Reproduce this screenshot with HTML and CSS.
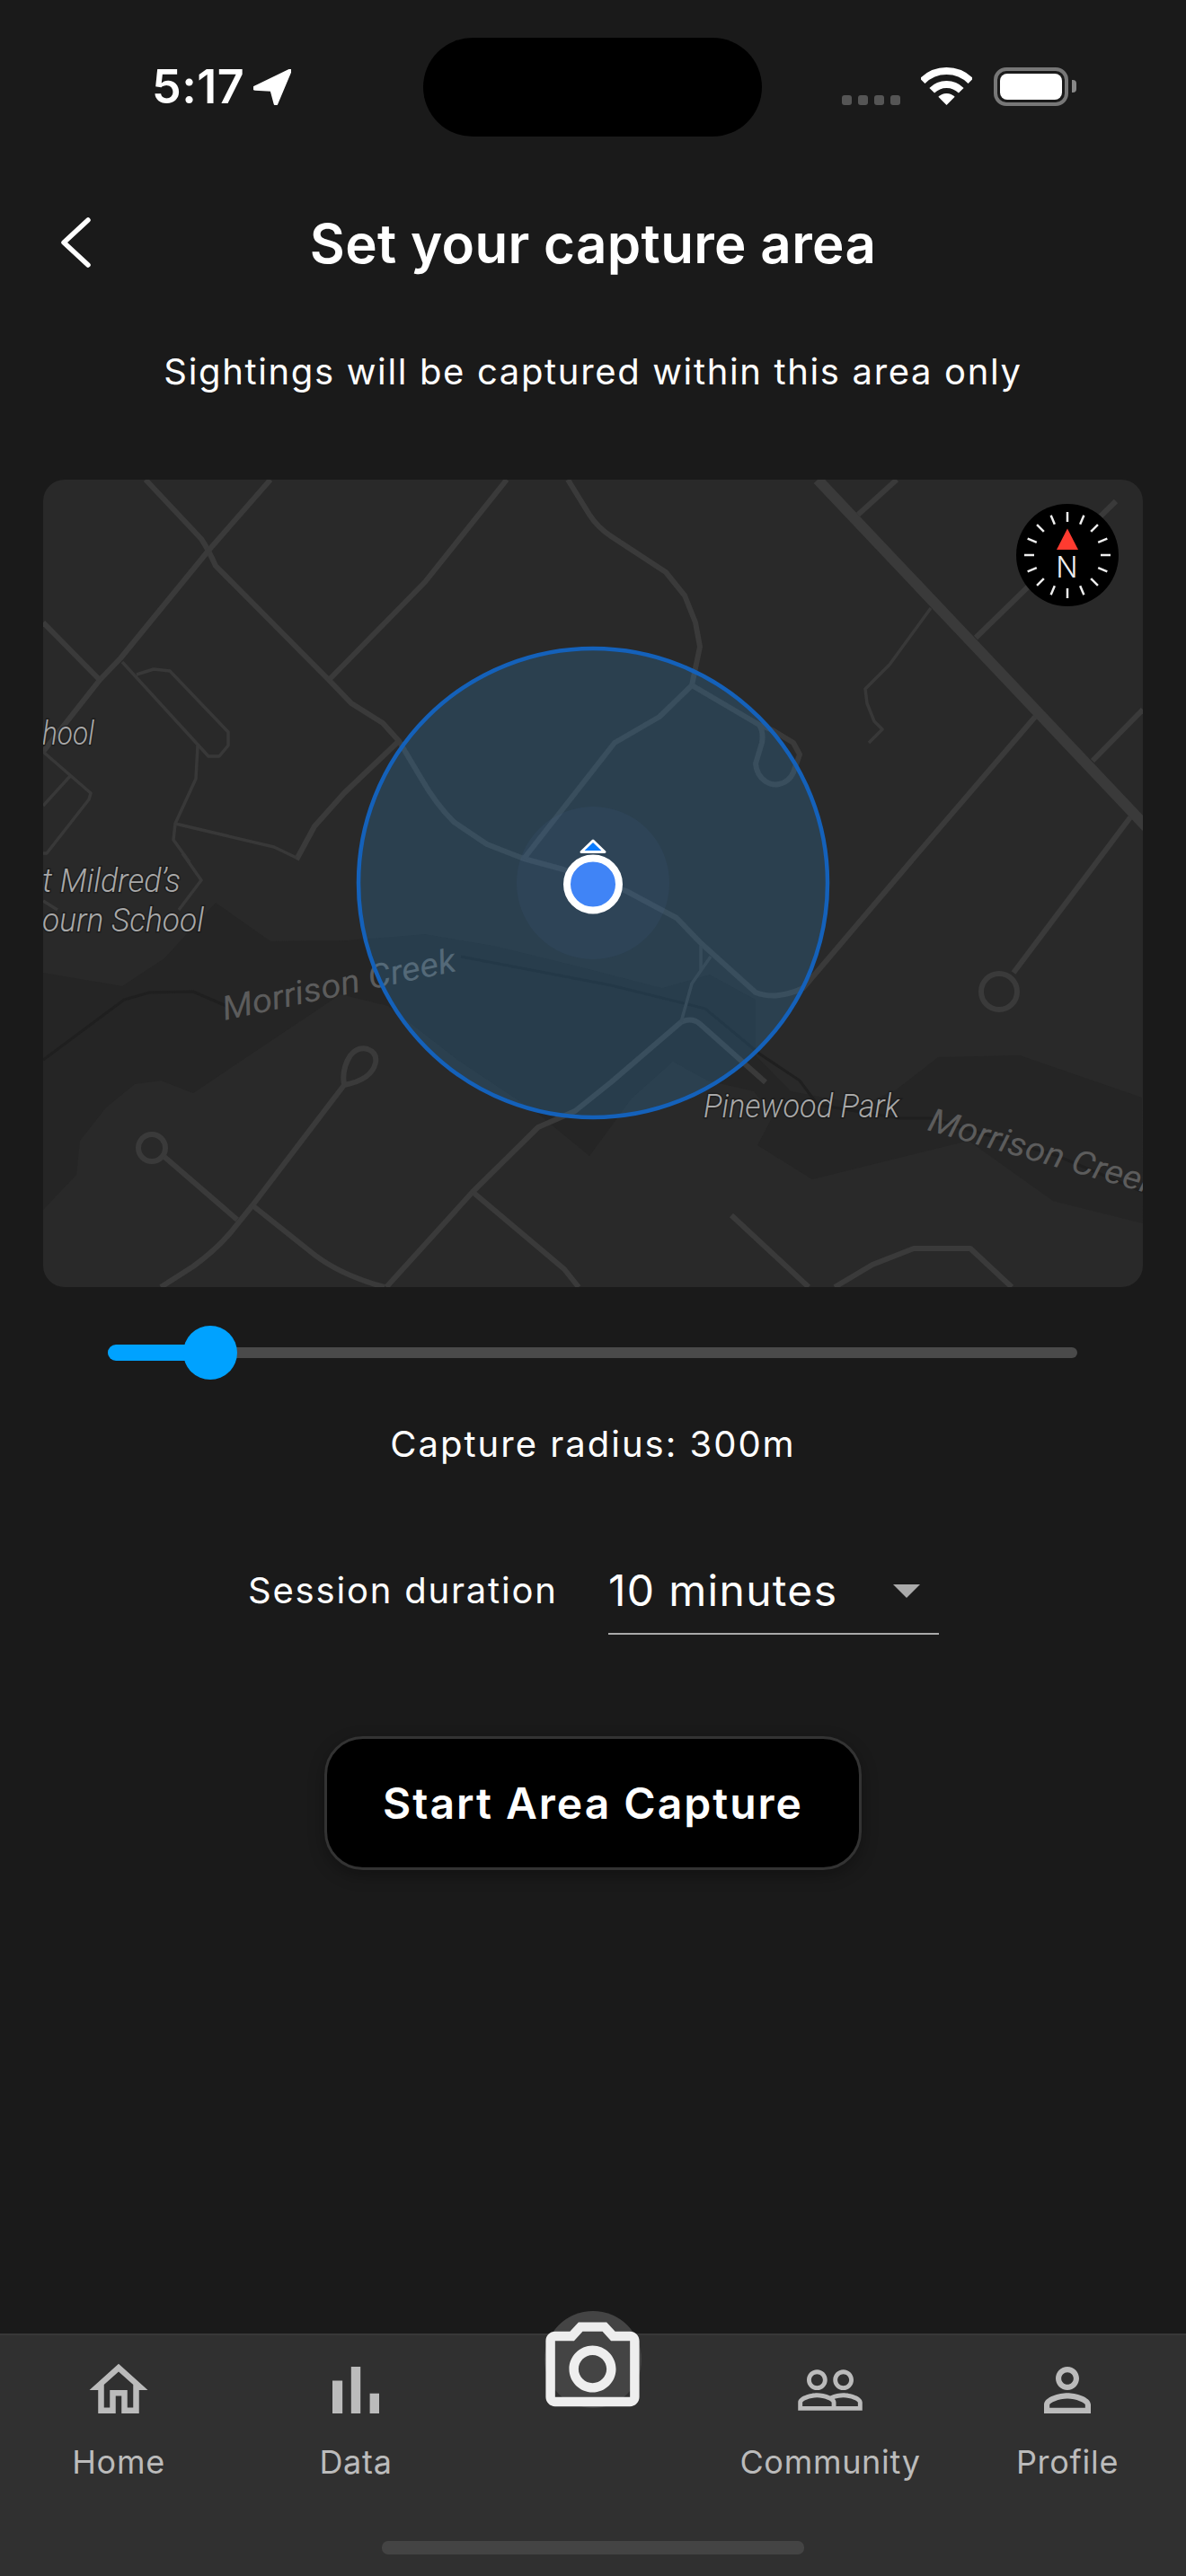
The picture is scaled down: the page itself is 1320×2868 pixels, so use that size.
FILE: index.html
```html
<!DOCTYPE html>
<html lang="en">
<head>
<meta charset="utf-8">
<title>Set your capture area</title>
<link rel="stylesheet" href="styles.css">
</head>
<body>
<div class="page">
  <div class="status">
    <div class="status-left">
      <span class="time">5:17</span>
      <svg class="loc" viewBox="0 0 42 40"><path d="M40 .6c1.300-.6 2.400.5 1.800 1.800L26.500 38.600c-.7 1.600-2.800 1.300-3.200-.3L19.500 24 2 23c-2-.1-2.600-2.700-.8-3.600z"/></svg>
    </div>
    <div class="island"></div>
    <div class="status-right">
      <div class="dots"><i></i><i></i><i></i><i></i></div>
      <svg class="wifi" viewBox="0 0 57 42"><path class="wifi-arc" d="M1.630 15.130A38 38 0 0 1 55.370 15.130"/><path class="wifi-arc" d="M12.240 25.740A23 23 0 0 1 44.760 25.740"/><path class="wifi-fill" d="M28.500 42L19.300 32.800A13 13 0 0 1 37.700 32.800Z"/></svg>
      <div class="battery"><div class="battery-fill"></div></div>
      <div class="battery-nub"></div>
    </div>
  </div>

  <header class="header">
    <svg class="back" viewBox="0 0 34 56"><path d="M31 3L4 28l27 25"/></svg>
    <h1 class="title">Set your capture area</h1>
  </header>
  <p class="sub">Sightings will be captured within this area only</p>

  <svg class="map" viewBox="48 534 1224 899" xmlns="http://www.w3.org/2000/svg">
    <defs><clipPath id="mapclip"><rect x="48" y="534" width="1224" height="899" rx="24"/></clipPath></defs>
    <g clip-path="url(#mapclip)">
      <rect class="land" x="48" y="534" width="1224" height="899"/>
      <path class="water" d="M48 1083L136 1098L183 1067L240 1005L301 1048L387 1047L473 1040L550 1053L640 1075L737 1100L790 1085L841 1113L841 1175L880 1215L960 1230L998 1213L1044 1177L1135 1175L1271 1222L1272 1362L1172 1337L1078 1270L904 1313L843 1275L860 1243L839 1215L787 1203L749 1182L703 1223L656 1287L599 1240L509 1180L432 1120L379 1107L215 1217L179 1203L150 1207L118 1233L89 1270L85 1308L48 1347Z"/>
      <path class="creek" d="M48 1180L138 1113L166 1105L215 1104L252 1120M513 1065L680 1097L785 1123L845 1173L890 1203L910 1230L1001 1245L1036 1245L1177 1287L1272 1327"/>

      <path class="rd" d="M162 534L224 600Q232 612 240 630L366 757L391 783L426 805L444 825L469 867Q485 895 505 915L542 940L583 956L627 968L697 992L753 1022L780 1050L841 1105Q855 1110 867 1108Q882 1106 894 1100L1013 960L1153 797"/>
      <path class="rd" d="M301 534L232 613L134 733L111 757L48 837"/>
      <path class="rd" d="M48 693L111 757"/>
      <path class="rd" d="M564 534L473 648L366 757"/>
      <path class="rd" d="M632 534L656 573Q665 587 680 597L741 637L762 663L774 693L779 720L770 763L734 798L684 827L583 956"/>
      <path class="rd" d="M770 763L845 807Q850 815 848 827L841 850Q842 863 852 870Q860 875 867 873Q878 871 883 860L890 840L883 827L860 813L845 807"/>
      <path class="rd-main" d="M910 534L1280 925"/>
      <path class="rd" d="M998 534L955 573"/>
      <path class="rd" d="M1242 558L1086 710"/>
      <path class="rd" d="M1272 790L1216 847"/>
      <path class="rd" d="M1258 910L1128 1083"/>
      <circle class="rd" cx="1112" cy="1104" r="20"/>
      <path class="rd" d="M444 825L383 883L350 920L330 957"/>
      <path class="rd-thin" d="M1036 677L990 740L963 767L965 783L973 803L982 812L967 827"/>
      <path class="rd-thin" d="M136 737L232 842L244 842L254 830L254 815L189 747L171 745L152 751"/>
      <path class="rd-thin" d="M220 830L218 867L195 917L193 935L211 960"/>
      <path class="rd-thin" d="M195 917L305 943L330 955"/>
      <path class="rd-thin" d="M48 837L101 883L99 890L52 950L48 950M79 863L48 897"/>
      <path class="rd-thin" d="M203 950L224 980L199 1013M48 1003L64 1013"/>
      <path class="rd" d="M179 1433L215 1410Q240 1392 256 1373L281 1342L383 1208Q380 1190 390 1175Q398 1165 409 1168Q420 1172 418 1183Q414 1202 383 1208"/>
      <circle class="rd" cx="169" cy="1278" r="15"/>
      <path class="rd" d="M183 1288L264 1358M281 1342L350 1397Q380 1420 428 1433"/>
      <path class="rd" d="M430 1433L526 1327L599 1255L640 1237L680 1205L758 1138Q770 1132 779 1140L852 1205"/>
      <path class="rd" d="M526 1327L628 1413L644 1433"/>
      <path class="rd-thin" d="M758 1138L770 1095L791 1065M780 1053L780 1080"/>
      <path class="rd" d="M814 1353L900 1433M929 1433L971 1408L1017 1390L1080 1390L1126 1433"/>

      <text class="lbl" x="47" y="829" textLength="58" lengthAdjust="spacingAndGlyphs">hool</text>
      <text class="lbl" x="47" y="993" textLength="154" lengthAdjust="spacingAndGlyphs">t Mildred’s</text>
      <text class="lbl" x="47" y="1037" textLength="180" lengthAdjust="spacingAndGlyphs">ourn School</text>
      <text class="lbl" x="783" y="1244" textLength="218" lengthAdjust="spacingAndGlyphs">Pinewood Park</text>
      <text class="creek-lbl" transform="translate(250 1136) rotate(-12)" textLength="265" lengthAdjust="spacingAndGlyphs">Morrison Creek</text>
      <text class="creek-lbl" transform="translate(1031 1258) rotate(16)" textLength="265" lengthAdjust="spacingAndGlyphs">Morrison Creek</text>

      <circle class="area" cx="660" cy="983" r="261"/>
      <circle class="halo" cx="660" cy="983" r="85"/>
      <path class="heading" d="M660 936L673 948.500L647 948.500Z"/>
      <circle class="dot" cx="660" cy="984.500" r="29"/>

      <circle class="compass" cx="1188" cy="618" r="57"/>
      <g class="ticks">
        <line x1="1188" y1="570" x2="1188" y2="581" transform="rotate(0 1188 618)"/>
        <line x1="1188" y1="570" x2="1188" y2="581" transform="rotate(22.500 1188 618)"/>
        <line x1="1188" y1="570" x2="1188" y2="581" transform="rotate(45 1188 618)"/>
        <line x1="1188" y1="570" x2="1188" y2="581" transform="rotate(67.500 1188 618)"/>
        <line x1="1188" y1="570" x2="1188" y2="581" transform="rotate(90 1188 618)"/>
        <line x1="1188" y1="570" x2="1188" y2="581" transform="rotate(112.500 1188 618)"/>
        <line x1="1188" y1="570" x2="1188" y2="581" transform="rotate(135 1188 618)"/>
        <line x1="1188" y1="570" x2="1188" y2="581" transform="rotate(157.500 1188 618)"/>
        <line x1="1188" y1="570" x2="1188" y2="581" transform="rotate(180 1188 618)"/>
        <line x1="1188" y1="570" x2="1188" y2="581" transform="rotate(202.500 1188 618)"/>
        <line x1="1188" y1="570" x2="1188" y2="581" transform="rotate(225 1188 618)"/>
        <line x1="1188" y1="570" x2="1188" y2="581" transform="rotate(247.500 1188 618)"/>
        <line x1="1188" y1="570" x2="1188" y2="581" transform="rotate(270 1188 618)"/>
        <line x1="1188" y1="570" x2="1188" y2="581" transform="rotate(292.500 1188 618)"/>
        <line x1="1188" y1="570" x2="1188" y2="581" transform="rotate(315 1188 618)"/>
        <line x1="1188" y1="570" x2="1188" y2="581" transform="rotate(337.500 1188 618)"/>
      </g>
      <path class="needle" d="M1188 588.500L1200 612L1176 612Z"/>
      <text class="north" x="1187.500" y="643">N</text>
    </g>
  </svg>

  <div class="slider">
    <div class="track"></div>
    <div class="track-on"></div>
    <div class="thumb"></div>
  </div>
  <p class="radius">Capture radius: 300m</p>

  <div class="duration">
    <span class="duration-label">Session duration</span>
    <div class="select">
      <span class="select-value">10 minutes</span>
      <span class="caret"></span>
    </div>
  </div>

  <button class="start">Start Area Capture</button>

  <nav class="nav">
    <div class="nav-item">
      <svg class="nav-icon" viewBox="0 0 24 24"><path d="M12 5.690l5 4.500V18h-2v-6H9v6H7v-7.810l5-4.500M12 3L2 12h3v8h6v-6h2v6h6v-8h3L12 3z"/></svg>
      <span class="nav-label">Home</span>
    </div>
    <div class="nav-item">
      <svg class="nav-icon" viewBox="1.500 1.500 21 21"><path d="M5 9.200h3V19H5zM10.600 5h2.800v14h-2.800zm5.600 8H19v6h-2.800z"/></svg>
      <span class="nav-label">Data</span>
    </div>
    <div class="nav-item nav-cam">
      <div class="cam-halo"></div>
      <svg class="cam-icon" viewBox="0 0 24 24"><path d="M14.120 4l1.830 2H20v12H4V6h4.050l1.830-2h4.240M15 2H9L7.170 4H4c-1.100 0-2 .9-2 2v12c0 1.100.9 2 2 2h16c1.100 0 2-.9 2-2V6c0-1.100-.9-2-2-2h-3.170L15 2zm-3 7c1.650 0 3 1.350 3 3s-1.350 3-3 3-3-1.350-3-3 1.350-3 3-3m0-2c-2.760 0-5 2.240-5 5s2.240 5 5 5 5-2.240 5-5-2.240-5-5-5z"/></svg>
    </div>
    <div class="nav-item">
      <svg class="nav-icon" viewBox="0 0 24 24"><path d="M16.500 13c-1.200 0-3.070.34-4.500 1-1.430-.67-3.300-1-4.500-1C5.330 13 1 14.080 1 16.250V19h22v-2.750c0-2.170-4.330-3.250-6.500-3.250zm-4 4.500h-10v-1.250c0-.54 2.560-1.750 5-1.750s5 1.210 5 1.750v1.250zm9 0H14v-1.250c0-.46-.2-.86-.52-1.220.88-.3 1.960-.53 3.020-.53 2.440 0 5 1.210 5 1.750v1.250zM7.500 12c1.930 0 3.500-1.570 3.500-3.500S9.430 5 7.500 5 4 6.570 4 8.500 5.570 12 7.500 12zm0-5.500c1.100 0 2 .9 2 2s-.9 2-2 2-2-.9-2-2 .9-2 2-2zm9 5.500c1.930 0 3.500-1.570 3.500-3.500S18.430 5 16.500 5 13 6.570 13 8.500s1.570 3.500 3.500 3.500zm0-5.500c1.100 0 2 .9 2 2s-.9 2-2 2-2-.9-2-2 .9-2 2-2z"/></svg>
      <span class="nav-label">Community</span>
    </div>
    <div class="nav-item">
      <svg class="nav-icon" viewBox="0 0 24 24"><path d="M12 5.900c1.160 0 2.100.94 2.100 2.100s-.94 2.100-2.100 2.100S9.900 9.160 9.900 8s.94-2.100 2.100-2.100m0 9c2.970 0 6.100 1.460 6.100 2.100v1.100H5.900V17c0-.64 3.130-2.100 6.100-2.100M12 4C9.790 4 8 5.790 8 8s1.790 4 4 4 4-1.790 4-4-1.790-4-4-4zm0 9c-2.670 0-8 1.340-8 4v3h16v-3c0-2.660-5.330-4-8-4z"/></svg>
      <span class="nav-label">Profile</span>
    </div>
    <div class="home-bar"></div>
  </nav>
</div>
</body>
</html>
```

FILE: styles.css
```css
* { box-sizing: border-box; }
html, body { margin: 0; padding: 0; background: #1a1a1a; }
body { font-family: Inter, "Liberation Sans", sans-serif; color: #fff; }
.page { width: 1320px; height: 2868px; display: flex; flex-direction: column; overflow: hidden; position: relative; }

/* status bar */
.status { display: grid; grid-template-columns: 471px 377px 1fr; margin-top: 42px; height: 110px; }
.status-left { display: flex; align-items: center; padding-left: 169px; gap: 10px; }
.time { font-size: 52px; font-weight: 600; line-height: 1; letter-spacing: .5px; }
.loc { width: 42px; height: 40px; fill: #fff; stroke: #fff; stroke-width: 1.500; stroke-linejoin: round; }
.island { background: #000; border-radius: 55px; }
.status-right { position: relative; display: flex; align-items: flex-start; padding-left: 89px; }
.dots { display: flex; gap: 7px; margin-top: 64px; }
.dots i { width: 11px; height: 11px; border-radius: 3px; background: #555; }
.wifi { width: 57px; height: 42px; margin-left: 23px; margin-top: 33px; flex: none; }
.wifi-arc { fill: none; stroke: #fff; stroke-width: 8; }
.wifi-fill { fill: #fff; }
.battery { width: 83px; height: 43px; margin-left: 24px; margin-top: 33px; border: 4px solid #777; border-radius: 14px; padding: 3px; flex: none; }
.battery-fill { width: 100%; height: 100%; background: #fff; border-radius: 8px; }
.battery-nub { width: 5px; height: 14px; margin-left: 4px; margin-top: 47px; background: #888; border-radius: 0 4px 4px 0; flex: none; }

/* header */
.header { position: relative; display: flex; justify-content: center; margin-top: 83px; }
.back { position: absolute; left: 67px; top: 7px; width: 34px; height: 56px; fill: none; stroke: #fff; stroke-width: 5.500; stroke-linecap: round; stroke-linejoin: round; }
.title { margin: 0; font-size: 60px; font-weight: 600; line-height: 72px; letter-spacing: .35px; }
.sub { margin: 82px 0 0; font-size: 40px; line-height: 50px; text-align: center; letter-spacing: 1.650px; }

/* map */
.map { display: block; width: 1224px; height: 899px; margin: 95px 0 0 48px; flex: none; }
.land { fill: #292929; }
.water { fill: #252525; }
.creek { fill: none; stroke: #1f1f1f; stroke-width: 3; }
.rd, .rd-main, .rd-thin { fill: none; stroke: #3a3a3a; stroke-linejoin: round; }
.rd { stroke-width: 6; }
.rd-main { stroke-width: 12; }
.rd-thin { stroke-width: 3.500; stroke: #383838; }
.lbl { font-family: Roboto, sans-serif; font-style: italic; font-weight: 300; font-size: 36px; fill: #a8a8a8; stroke: #151515; stroke-width: 3px; stroke-opacity: .55; paint-order: stroke; }
.creek-lbl { font-family: Roboto, sans-serif; font-style: italic; font-weight: 400; font-size: 37px; fill: #5c5c5c; }
.area { fill: rgba(56, 161, 236, .2); stroke: #1461ba; stroke-width: 4.500; }
.halo { fill: rgba(80, 110, 170, .1); }
.heading { fill: #0a7cff; stroke: #fff; stroke-width: 3; stroke-linejoin: round; }
.dot { fill: #4084f6; stroke: #fff; stroke-width: 8; }
.compass { fill: #000; }
.ticks line { stroke: #eee; stroke-width: 2.500; }
.needle { fill: #ff3b30; }
.north { font-family: Inter, sans-serif; font-weight: 300; font-size: 32px; fill: #eee; text-anchor: middle; }

/* slider */
.slider { position: relative; height: 60px; margin: 43px 121px 0 120px; flex: none; }
.track { position: absolute; left: 0; right: 0; top: 24px; height: 12px; background: #4a4a4a; border-radius: 6px; }
.track-on { position: absolute; left: 0; width: 114px; top: 21px; height: 18px; background: #00a2ff; border-radius: 9px; }
.thumb { position: absolute; left: 84px; top: 0; width: 60px; height: 60px; border-radius: 50%; background: #00a2ff; }
.radius { margin: 47px 0 0; font-size: 40px; line-height: 50px; text-align: center; letter-spacing: 2px; }

/* duration */
.duration { display: flex; align-items: flex-start; padding-left: 276px; margin-top: 45px; }
.duration-label { font-size: 40px; line-height: 50px; letter-spacing: 1.800px; width: 401px; margin-top: 68px; }
.select { width: 368px; height: 79px; margin-top: 63px; border-bottom: 2px solid #aaa; display: flex; align-items: flex-start; flex: none; position: relative; }
.select-value { font-size: 48px; line-height: 60px; letter-spacing: 1.300px; }
.caret { position: absolute; left: 317px; top: 23px; width: 0; height: 0; border-left: 15.500px solid transparent; border-right: 15.500px solid transparent; border-top: 15px solid #aaa; }

/* button */
.start { display: block; align-self: center; width: 598px; height: 149px; margin-top: 113px; background: #000; color: #fff; border: 3px solid #333; border-radius: 43px; font-family: Inter, sans-serif; font-size: 48px; font-weight: 600; letter-spacing: 2px; box-shadow: 0 6px 18px rgba(0,0,0,.3); padding: 0; }

/* nav */
.nav { position: absolute; left: 0; right: 0; bottom: 0; height: 270px; background: #303030; border-top: 2px solid #383838; display: grid; grid-template-columns: repeat(5, 264px); padding-top: 22px; }
.nav-item { display: flex; flex-direction: column; align-items: center; position: relative; }
.nav-icon { width: 78px; height: 78px; fill: #bbb; }
.nav-label { font-size: 36px; line-height: 44px; margin-top: 19px; color: #bbb; letter-spacing: .7px; white-space: nowrap; }
.cam-halo { position: absolute; left: 78px; top: -49px; width: 108px; height: 108px; border-radius: 50%; background: #444; }
.cam-icon { position: absolute; left: 69px; top: -47px; width: 125px; height: 125px; fill: #eee; }
.home-bar { position: absolute; left: 425px; top: 229px; width: 470px; height: 15px; border-radius: 7px; background: #444; }
```
